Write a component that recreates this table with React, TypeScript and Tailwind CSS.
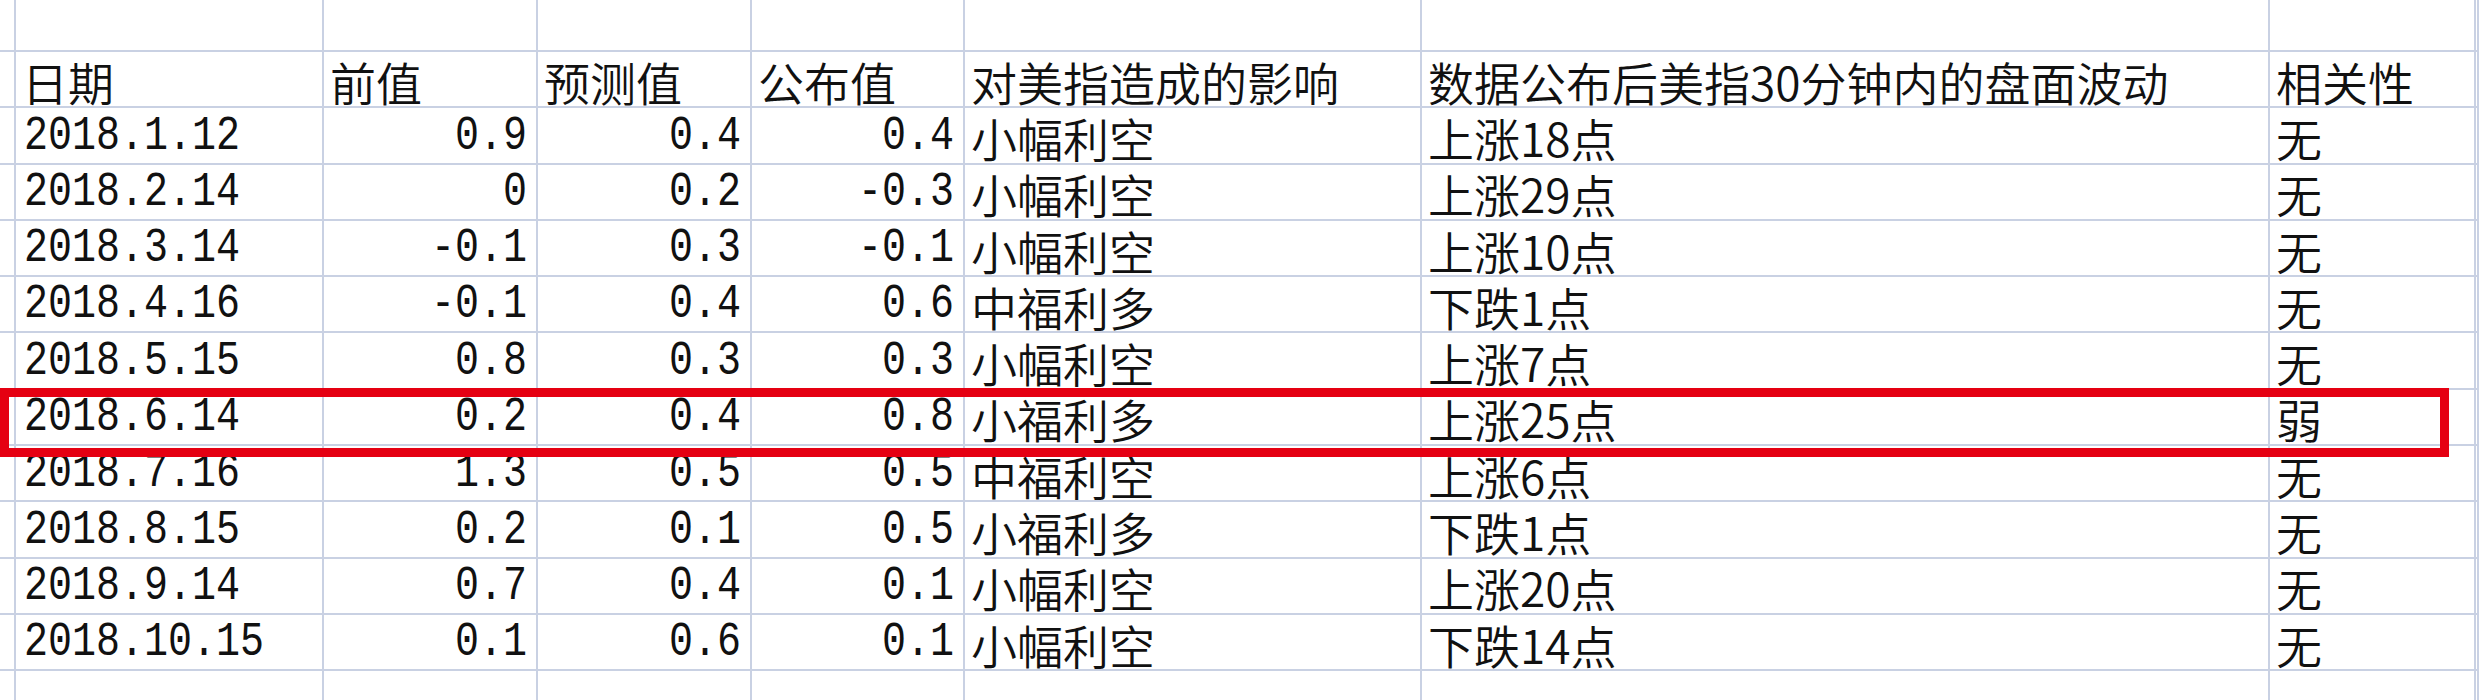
import React from "react";

type Row = {
  date: string;
  prev: string;
  forecast: string;
  actual: string;
  impact: string;
  move: string;
  corr: string;
};

const rows: Row[] = [
  { date: "2018.1.12", prev: "0.9", forecast: "0.4", actual: "0.4", impact: "小幅利空", move: "上涨18点", corr: "无" },
  { date: "2018.2.14", prev: "0", forecast: "0.2", actual: "-0.3", impact: "小幅利空", move: "上涨29点", corr: "无" },
  { date: "2018.3.14", prev: "-0.1", forecast: "0.3", actual: "-0.1", impact: "小幅利空", move: "上涨10点", corr: "无" },
  { date: "2018.4.16", prev: "-0.1", forecast: "0.4", actual: "0.6", impact: "中福利多", move: "下跌1点", corr: "无" },
  { date: "2018.5.15", prev: "0.8", forecast: "0.3", actual: "0.3", impact: "小幅利空", move: "上涨7点", corr: "无" },
  { date: "2018.6.14", prev: "0.2", forecast: "0.4", actual: "0.8", impact: "小福利多", move: "上涨25点", corr: "弱" },
  { date: "2018.7.16", prev: "1.3", forecast: "0.5", actual: "0.5", impact: "中福利空", move: "上涨6点", corr: "无" },
  { date: "2018.8.15", prev: "0.2", forecast: "0.1", actual: "0.5", impact: "小福利多", move: "下跌1点", corr: "无" },
  { date: "2018.9.14", prev: "0.7", forecast: "0.4", actual: "0.1", impact: "小幅利空", move: "上涨20点", corr: "无" },
  { date: "2018.10.15", prev: "0.1", forecast: "0.6", actual: "0.1", impact: "小幅利空", move: "下跌14点", corr: "无" },
];

const headers = ["日期", "前值", "预测值", "公布值", "对美指造成的影响", "数据公布后美指30分钟内的盘面波动", "相关性"];

// cell base: gridline on right + bottom, text sits on the bottom like excel
const cell = "flex items-end border-r-2 border-b-2 border-[#c9d1e3] whitespace-nowrap";
const cjk = "font-['Noto_Sans_CJK_SC',sans-serif] font-[350] text-[46px] leading-[1.1] pl-[6px] text-[#111]";
// half-width digits, stretched a bit to get the tall song-ti figures
const mono = "inline-block origin-bottom scale-y-[1.2] font-['Liberation_Mono',monospace] text-[40px] leading-none mb-[2px] text-[#111]";

const Empty = () => <div className={cell} />;

export default function App() {
  return (
    <div className="relative w-[2479px] h-[700px] overflow-hidden bg-white">
      <div className="grid grid-cols-[16px_308px_214px_214px_213px_457px_848px_206px_3px] grid-rows-[52px_repeat(11,56.3px)_29px]">
        {/* top spare row */}
        {Array.from({ length: 9 }).map((_, i) => (
          <Empty key={"t" + i} />
        ))}

        {/* header */}
        <Empty />
        {headers.map((h) => (
          <div key={h} className={cell}>
            <span className={cjk}>{h}</span>
          </div>
        ))}
        <Empty />

        {rows.map((r) => (
          <React.Fragment key={r.date}>
            <Empty />
            <div className={cell}>
              <span className={mono + " ml-[8px]"}>{r.date}</span>
            </div>
            <div className={cell + " justify-end"}>
              <span className={mono + " mr-[9px]"}>{r.prev}</span>
            </div>
            <div className={cell + " justify-end"}>
              <span className={mono + " mr-[9px]"}>{r.forecast}</span>
            </div>
            <div className={cell + " justify-end"}>
              <span className={mono + " mr-[9px]"}>{r.actual}</span>
            </div>
            <div className={cell}>
              <span className={cjk}>{r.impact}</span>
            </div>
            <div className={cell}>
              <span className={cjk}>{r.move}</span>
            </div>
            <div className={cell}>
              <span className={cjk}>{r.corr}</span>
            </div>
            <Empty />
          </React.Fragment>
        ))}

        {/* bottom partial row */}
        {Array.from({ length: 9 }).map((_, i) => (
          <div key={"b" + i} className="border-r-2 border-[#c9d1e3]" />
        ))}
      </div>

      {/* red highlight around the 2018.6.14 row */}
      <div className="absolute left-0 top-[388px] w-[2449px] h-[69px] border-[9px] border-[#e50012] pointer-events-none" />
    </div>
  );
}
